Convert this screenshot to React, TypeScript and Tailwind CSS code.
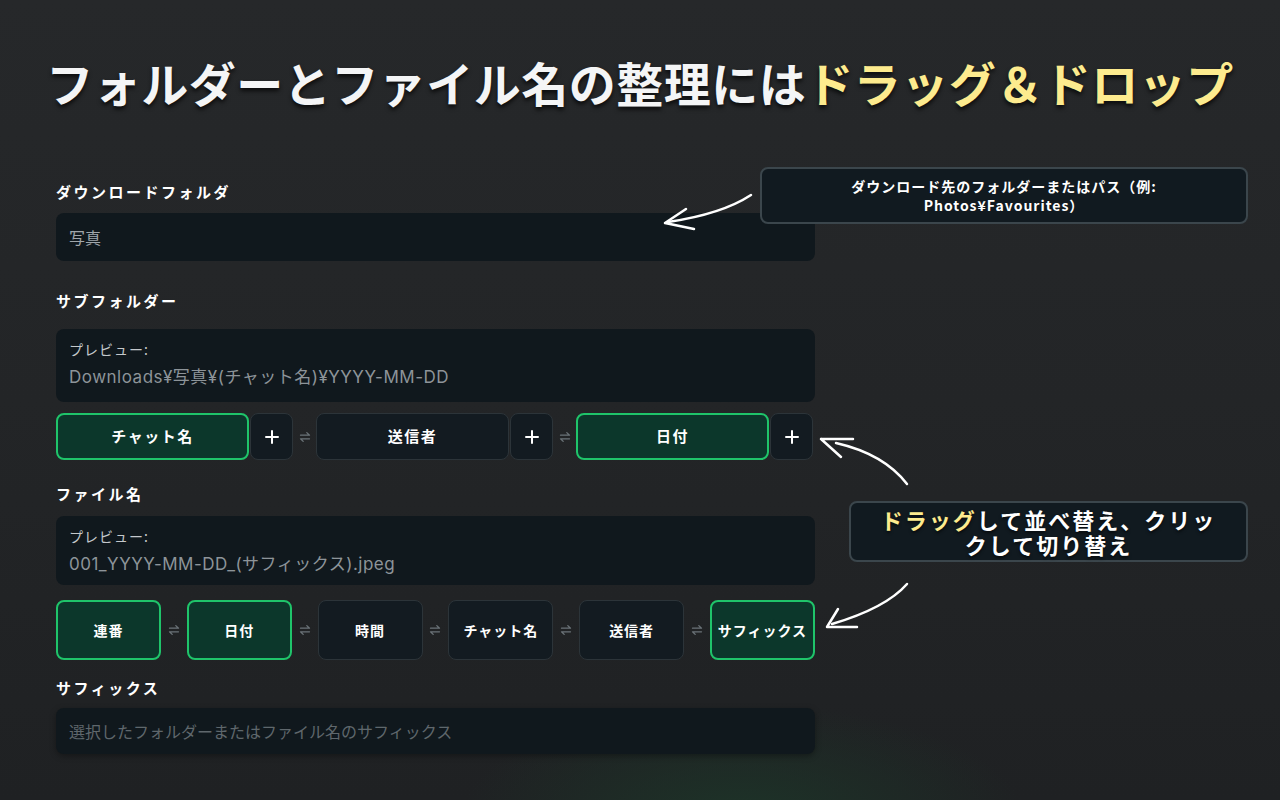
import React from "react";

const jp = { fontFamily: '"Noto Sans CJK JP", "Noto Sans", sans-serif' };
const latin = { fontFamily: 'Inter, "Noto Sans CJK JP", sans-serif' };

function Swap() {
  return (
    <svg width="12" height="12" viewBox="0 0 12 12" fill="none" stroke="#6b7378" strokeWidth="1.3" strokeLinecap="round" strokeLinejoin="round">
      <path d="M1.5 4.2h9L7.8 1.6" />
      <path d="M10.5 7.8h-9l2.7 2.6" />
    </svg>
  );
}

function Plus() {
  return (
    <svg width="14" height="14" viewBox="0 0 14 14" stroke="white" strokeWidth="2" strokeLinecap="round">
      <path d="M7 1v12M1 7h12" />
    </svg>
  );
}

function Chip({ label, active, className }: { label: string; active?: boolean; className: string }) {
  return (
    <div
      className={`flex items-center justify-center rounded-lg font-bold text-white ${className} ${
        active ? "border-2 border-[#1fc46a] bg-[#0c372b]" : "border border-[#2c3439] bg-[#131b21]"
      }`}
    >
      {label}
    </div>
  );
}

function PlusBox() {
  return (
    <div className="flex h-[47px] w-[43px] items-center justify-center rounded-lg border border-[#2c3439] bg-[#131b21]">
      <Plus />
    </div>
  );
}

function Preview({ value, compact }: { value: string; compact?: boolean }) {
  return (
    <div className={`rounded-lg bg-[#10181d] px-[13px] pt-[12px] ${compact ? "pb-[10px]" : "pb-[14px]"}`}>
      <div className="text-[14px] leading-[17px] tracking-[1px] text-[#c4c8cc]">プレビュー:</div>
      <div style={latin} className="mt-[8px] text-[17px] leading-[22px] tracking-[0.5px] text-[#8d9499]">
        {value}
      </div>
    </div>
  );
}

function Label({ text }: { text: string }) {
  return <div className="text-[15px] font-bold leading-[22px] tracking-[2.5px] text-white">{text}</div>;
}

export default function App() {
  const subs = ["チャット名", "送信者", "日付"];
  const files: [string, boolean][] = [
    ["連番", true],
    ["日付", true],
    ["時間", false],
    ["チャット名", false],
    ["送信者", false],
    ["サフィックス", true],
  ];
  return (
    <div
      style={jp}
      className="relative h-[800px] w-full overflow-hidden bg-[radial-gradient(ellipse_22%_14%_at_58%_102%,#1d3328_0%,transparent_100%),linear-gradient(180deg,#26282a_0%,#232527_50%,#1f2123_100%)]"
    >
      <h1 className="pt-[52px] text-center text-[47px] font-bold leading-[60px] tracking-[0.5px] text-[#f4f5f6] [text-shadow:0_3px_4px_rgba(0,0,0,0.7)]">
        フォルダーとファイル名の整理には<span className="text-[#fdeb8e]">ドラッグ＆ドロップ</span>
      </h1>

      <div className="ml-[56px] mt-[69px] flex w-[759px] flex-col">
        <Label text="ダウンロードフォルダ" />
        <div className="mt-[10px] flex h-[48px] items-center rounded-lg bg-[#10181d] px-[13px] text-[16px] text-[#a0a6ab]">
          写真
        </div>

        <div className="mt-[29px]">
          <Label text="サブフォルダー" />
        </div>
        <div className="mt-[17px]">
          <Preview value="Downloads¥写真¥(チャット名)¥YYYY-MM-DD" />
        </div>
        <div className="mt-[11px] flex items-center">
          {subs.map((s, i) => (
            <React.Fragment key={s}>
              <Chip label={s} active={i !== 1} className="h-[47px] w-[193px] text-[15px] tracking-[1.5px]" />
              <div className="ml-[1px]">
                <PlusBox />
              </div>
              {i < 2 && (
                <div className="flex w-[23px] justify-center">
                  <Swap />
                </div>
              )}
            </React.Fragment>
          ))}
        </div>

        <div className="mt-[23px]">
          <Label text="ファイル名" />
        </div>
        <div className="mt-[11px]">
          <Preview value="001_YYYY-MM-DD_(サフィックス).jpeg" compact />
        </div>
        <div className="mt-[15px] flex items-center justify-between">
          {files.map(([f, a], i) => (
            <React.Fragment key={f}>
              <Chip label={f} active={a} className="h-[60px] w-[105px] text-[14px] tracking-[1px]" />
              {i < files.length - 1 && <Swap />}
            </React.Fragment>
          ))}
        </div>

        <div className="mt-[17px]">
          <Label text="サフィックス" />
        </div>
        <div className="mt-[9px] flex h-[46px] items-center rounded-lg bg-[#10181d] px-[13px] text-[16px] text-[#5f676c] shadow-[0_2px_6px_rgba(0,0,0,0.35)]">
          選択したフォルダーまたはファイル名のサフィックス
        </div>
      </div>

      <div className="absolute left-[760px] top-[167px] flex h-[57px] w-[488px] flex-col items-center justify-center rounded-lg border-2 border-[#3b464c] bg-[#111a20] text-center text-[14px] font-bold leading-[19px] tracking-[1px] text-white">
        <div>ダウンロード先のフォルダーまたはパス（例:</div>
        <div>Photos¥Favourites）</div>
      </div>

      <div className="absolute left-[849px] top-[501px] flex h-[61px] w-[399px] flex-col items-center justify-center rounded-lg border-2 border-[#3b464c] bg-[#111a20] text-center text-[22px] font-bold leading-[25px] tracking-[2px] text-white [text-shadow:0_2px_3px_rgba(0,0,0,0.6)]">
        <div>
          <span className="text-[#fdeb8e]">ドラッグ</span>して並べ替え、クリッ
        </div>
        <div>クして切り替え</div>
      </div>

      <svg className="pointer-events-none absolute left-0 top-0" width="1280" height="800" fill="none" stroke="white" strokeWidth="2.5" strokeLinecap="round">
        <path d="M751 195 Q722 214 668 222" />
        <path d="M665 223 L686 209 M665 223 L694 229" />
        <path d="M907 484 Q884 454 836 443" />
        <path d="M821 439 L853 439 M821 439 L841 457" />
        <path d="M907 584 Q886 608 832 624" />
        <path d="M827 627 L838 609 M827 627 L857 627" />
      </svg>
    </div>
  );
}
